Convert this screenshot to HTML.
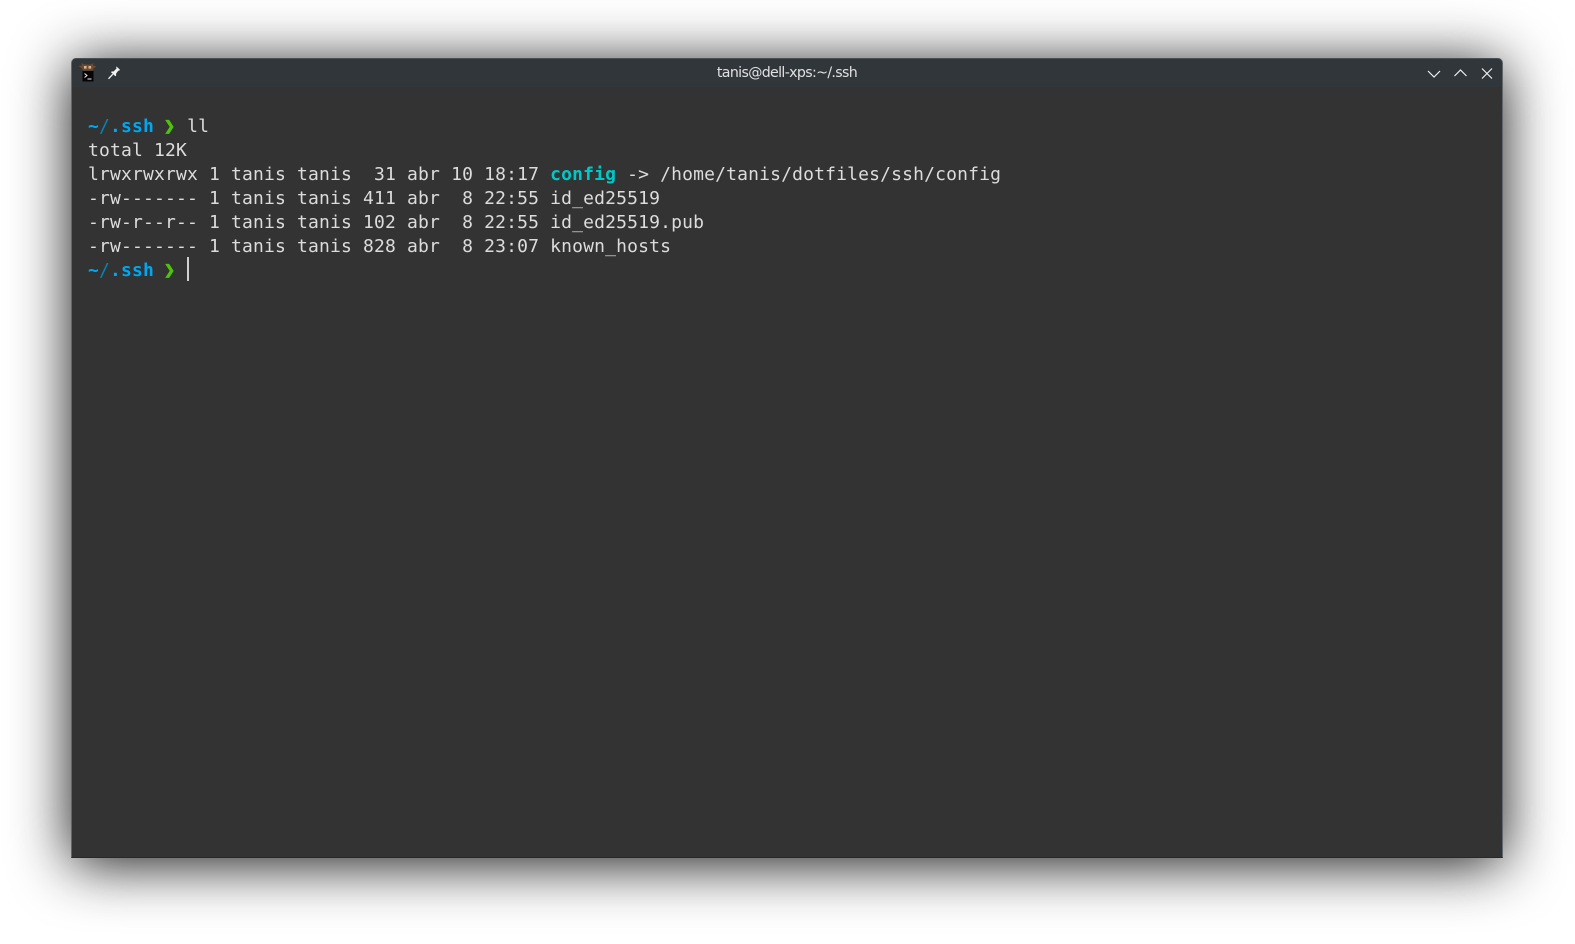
<!DOCTYPE html>
<html>
<head>
<meta charset="utf-8">
<style>
html,body{margin:0;padding:0;width:1575px;height:944px;background:#fff;overflow:hidden}
#win{position:absolute;left:71px;top:58px;width:1432px;height:800px;background:#333;border-radius:5px 5px 0 0;box-shadow:0 6px 58px rgba(0,0,0,.92);box-sizing:border-box;border:1px solid #62676b;border-top-color:#4a4f53;border-bottom-color:#26282a}
#bar{position:absolute;left:0;top:0;right:0;height:28px;background:#31363b;border-radius:4px 4px 0 0}
#title{position:absolute;left:0;top:6px;width:1430px;text-align:center;font:14.2px/17px "DejaVu Sans",sans-serif;letter-spacing:-.66px;color:#dfe1e2}
pre{position:absolute;margin:0;left:88px;top:115px;font:18px/24px "DejaVu Sans Mono",monospace;letter-spacing:.165px;color:#dcdcdc}
.b{font-weight:bold}.bl{color:#00a6f0}.dl{color:#0087b8}.g{color:#4ec40a;-webkit-text-stroke:.9px #4ec40a;position:relative;left:-1px}.c{color:#00c8c8;font-weight:bold}
#cursor{position:absolute;left:187px;top:257px;width:2px;height:24px;background:#d0d0d0}
svg{position:absolute}
</style>
</head>
<body>
<div id="win"><div id="bar"></div><div id="title">tanis@dell-xps:~/.ssh</div></div>
<pre><span class="b bl">~</span><span class="dl">/</span><span class="b bl">.ssh</span> <span class="b g">❯</span> ll
total 12K
lrwxrwxrwx 1 tanis tanis  31 abr 10 18:17 <span class="c">config</span> -&gt; /home/tanis/dotfiles/ssh/config
-rw------- 1 tanis tanis 411 abr  8 22:55 id_ed25519
-rw-r--r-- 1 tanis tanis 102 abr  8 22:55 id_ed25519.pub
-rw------- 1 tanis tanis 828 abr  8 23:07 known_hosts
<span class="b bl">~</span><span class="dl">/</span><span class="b bl">.ssh</span> <span class="b g">❯</span></pre>
<div id="cursor"></div>
<svg style="left:78px;top:61px" width="20" height="22" viewBox="0 0 20 22">
<path d="M0.500 5l3.500-.5L3.500 2l3 1.500h6L15.500 2l-.5 2.500 3.500.5-3 2.500-.5 2H5l-1-2z" fill="#6f4a30"/>
<rect x="6" y="5" width="2.600" height="2.600" fill="#d9b48c"/><rect x="10.500" y="5" width="2.600" height="2.600" fill="#d9b48c"/>
<rect x="4.500" y="10" width="11" height="10.500" fill="#050505"/>
<path d="M6.500 12.500l2.500 2-2.500 2" fill="none" stroke="#eee" stroke-width="1"/><path d="M9.500 18h4" stroke="#eee" stroke-width="1"/>
</svg>
<svg style="left:106px;top:65px" width="16" height="16" viewBox="0 0 16 16">
<path d="M10.500 1.500l3.500 3.300-1 1-.7-.2-2.300 3.200.2 1.600-.8.800-4.400-4 .8-.8 1.800.1L10.700 3.300l-.6-1z" fill="#f2f3f3"/>
<path d="M6.800 9.200L2.500 13.800" stroke="#f2f3f3" stroke-width="1.300" fill="none"/>
</svg>
<svg style="left:1420px;top:60px" width="80" height="24" viewBox="0 0 80 24" fill="none" stroke="#eff0f1" stroke-width="1.200">
<path d="M8 11l6 6 6-6"/>
<path d="M34.500 16l6-6 6 6"/>
<path d="M62 8.500l10 10M72 8.500l-10 10"/>
</svg>
</body>
</html>
